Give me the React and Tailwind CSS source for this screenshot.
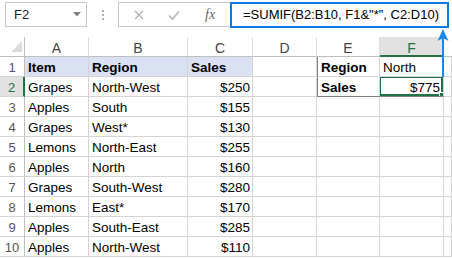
import React from 'react';

const rows = [
    ['Grapes', 'North-West', '$250'],
    ['Apples', 'South', '$155'],
    ['Grapes', 'West*', '$130'],
    ['Lemons', 'North-East', '$255'],
    ['Apples', 'North', '$160'],
    ['Grapes', 'South-West', '$280'],
    ['Lemons', 'East*', '$170'],
    ['Apples', 'South-East', '$285'],
    ['Apples', 'North-West', '$110'],
];

const cols = ['A', 'B', 'C', 'D', 'E', 'F'];

const cell = 'h-[20px] border-r border-b border-[#d4d4d4] px-[3px] pt-[2px] leading-[18px] whitespace-nowrap overflow-hidden';

const App = () => {
    const renderRow = (n, a, b, c, e, f, opts = {}) => (
        <React.Fragment key={n}>
            <div
                className={`h-[20px] border-b border-[#d4d4d4] text-center pt-[2px] leading-[18px] text-[13px] ${
                    opts.active
                        ? 'bg-[#e1e1e1] text-[#217346] border-r-2 border-r-[#217346]'
                        : 'text-[#555] border-r border-r-[#bfbfbf]'
                }`}
            >
                {n}
            </div>
            <div className={`${cell} ${opts.head ? 'bg-[#d9e1f2] font-bold' : ''}`}>{a}</div>
            <div className={`${cell} ${opts.head ? 'bg-[#d9e1f2] font-bold' : ''}`}>{b}</div>
            <div className={`${cell} ${opts.head ? 'bg-[#d9e1f2] font-bold' : 'text-right pr-[2px]'}`}>{c}</div>
            <div className={cell}></div>
            <div
                className={`${cell} font-bold ${opts.table ? 'border-l border-l-[#808080]' : ''} ${
                    opts.tableEnd ? 'border-b-[#808080]' : ''
                }`}
            >
                {e}
            </div>
            <div className={`${cell} relative ${opts.sel ? 'text-right pr-[3px]' : ''} ${opts.tableEnd ? 'border-b-[#808080]' : ''}`}>
                {f}
                {opts.sel && (
                    <div className="absolute top-[-1px] left-[-1px] right-0 bottom-0 border-2 border-[#217346]">
                        <div className="absolute right-[-4px] bottom-[-4px] w-[6px] h-[6px] bg-[#217346] border border-white"></div>
                    </div>
                )}
            </div>
            <div className={cell}></div>
        </React.Fragment>
    );

    return (
        <div className="w-[452px] h-[258px] bg-white relative overflow-hidden text-black" style={{ fontFamily: '"Liberation Sans", Arial, sans-serif' }}>
            {/* Formula bar */}
            <div className="h-[37px] flex items-start pt-[2px]">
                <div className="ml-[5px] w-[82px] h-[25px] border border-[#c6c6c6] flex items-center justify-between pl-[8px] pr-[5px]">
                    <span className="text-[13px] text-[#222]">F2</span>
                    <svg width="8" height="5" viewBox="0 0 8 5">
                        <path d="M0 0 H8 L4 4.5 Z" fill="#808080" />
                    </svg>
                </div>
                <div className="w-[31px] h-[25px] flex flex-col items-center justify-center gap-[2px]">
                    <div className="w-[2px] h-[2px] bg-[#b0b0b0]"></div>
                    <div className="w-[2px] h-[2px] bg-[#b0b0b0]"></div>
                    <div className="w-[2px] h-[2px] bg-[#b0b0b0]"></div>
                </div>
                <div className="w-[112px] h-[25px] border border-r-0 border-[#c6c6c6] flex items-center">
                    <svg className="ml-[15px]" width="10" height="10" viewBox="0 0 10 10">
                        <path d="M1 1 L9 9 M9 1 L1 9" stroke="#b4b4b4" strokeWidth="1.4" />
                    </svg>
                    <svg className="ml-[24px]" width="12" height="10" viewBox="0 0 12 10">
                        <path d="M1 5.5 L4.5 9 L11 1.5" stroke="#b4b4b4" strokeWidth="1.6" fill="none" />
                    </svg>
                    <span className="ml-[25px] italic text-[14px] text-[#666]" style={{ fontFamily: '"Liberation Serif", serif' }}>
                        fx
                    </span>
                </div>
                <div className="w-[219px] h-[26px] border-2 border-[#0a7ce0] flex items-center pl-[11px] text-[13px] whitespace-nowrap">
                    =SUMIF(B2:B10, F1&amp;"*", C2:D10)
                </div>
            </div>

            {/* Grid */}
            <div className="grid grid-cols-[25px_64px_99px_65px_64px_63px_64px_1fr]">
                {/* Column headers */}
                <div className="h-[20px] border-r border-b border-[#bfbfbf] relative">
                    <svg className="absolute right-[2px] bottom-[4px]" width="11" height="11" viewBox="0 0 11 11">
                        <path d="M11 0 V11 H0 Z" fill="#dcdcdc" />
                    </svg>
                </div>
                {cols.map((c) => (
                    <div
                        key={c}
                        className={`h-[20px] text-center text-[14px] pt-[1px] leading-[20px] ${
                            c === 'F'
                                ? 'bg-[#e1e1e1] text-[#217346] border-b-2 border-[#217346] border-r border-r-[#dcdcdc]'
                                : 'text-[#444] border-r border-[#dcdcdc] border-b border-b-[#bfbfbf]'
                        }`}
                    >
                        {c}
                    </div>
                ))}
                <div className="h-[20px] border-b border-[#bfbfbf]"></div>

                {/* Rows */}
                <div className="contents text-[13.5px]">
                    {renderRow(1, 'Item', 'Region', 'Sales', 'Region', <span className="font-normal">North</span>, { head: true, table: true })}
                    {rows.map((r, i) => {
                        const n = i + 2;
                        if (n === 2) {
                            return renderRow(n, r[0], r[1], r[2], 'Sales', <span className="font-normal">$775</span>, { active: true, table: true, tableEnd: true, sel: true });
                        }
                        return renderRow(n, r[0], r[1], r[2], '', '');
                    })}
                </div>
            </div>

            {/* Annotation arrow */}
            <svg className="absolute left-[437px] top-[29px]" width="12" height="50" viewBox="0 0 12 50">
                <path d="M6 6 V48" stroke="#1b87e6" strokeWidth="2" />
                <path d="M6 0 L11.5 12 L6 9 L0.5 12 Z" fill="#1b87e6" />
            </svg>
        </div>
    );
};

export default App;
